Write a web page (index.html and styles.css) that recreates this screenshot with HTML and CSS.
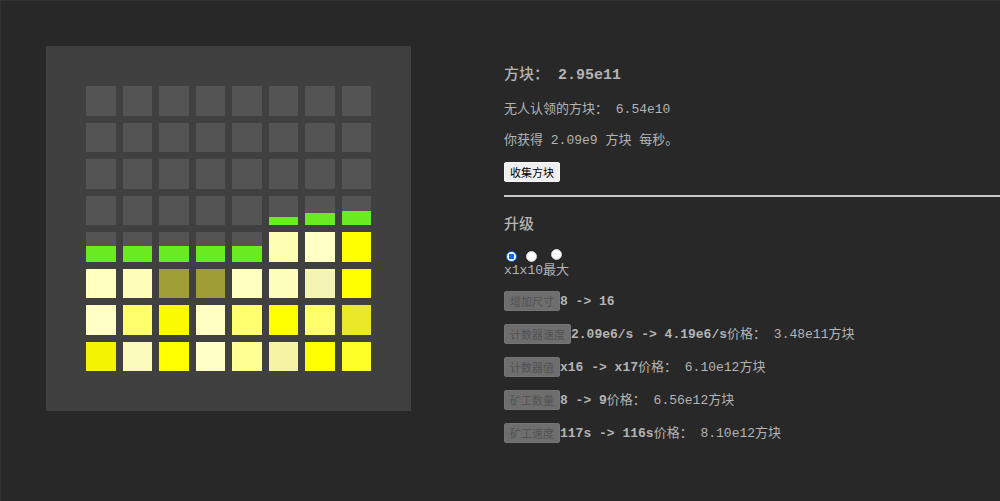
FILE: index.html
```html
<!DOCTYPE html>
<html lang="zh-CN">
<head>
<meta charset="utf-8">
<meta name="viewport" content="width=device-width, initial-scale=1">
<title>方块</title>
<link rel="stylesheet" href="styles.css">
</head>
<body>
<main class="game">
  <div class="board">
    <i class="cell"></i><i class="cell"></i><i class="cell"></i><i class="cell"></i><i class="cell"></i><i class="cell"></i><i class="cell"></i><i class="cell"></i>
    <i class="cell"></i><i class="cell"></i><i class="cell"></i><i class="cell"></i><i class="cell"></i><i class="cell"></i><i class="cell"></i><i class="cell"></i>
    <i class="cell"></i><i class="cell"></i><i class="cell"></i><i class="cell"></i><i class="cell"></i><i class="cell"></i><i class="cell"></i><i class="cell"></i>
    <i class="cell"></i><i class="cell"></i><i class="cell"></i><i class="cell"></i><i class="cell"></i>
    <i class="cell"><b class="fill" style="height:28%"></b></i><i class="cell"><b class="fill" style="height:42%"></b></i><i class="cell"><b class="fill" style="height:49%"></b></i>
    <i class="cell"><b class="fill" style="height:51%"></b></i><i class="cell"><b class="fill" style="height:54%"></b></i><i class="cell"><b class="fill" style="height:54%"></b></i><i class="cell"><b class="fill" style="height:54%"></b></i><i class="cell"><b class="fill" style="height:54%"></b></i>
    <i class="cell" style="background:#ffffb3"></i><i class="cell" style="background:#ffffc6"></i><i class="cell" style="background:#ffff00"></i>
    <i class="cell" style="background:#ffffc0"></i><i class="cell" style="background:#ffffbb"></i><i class="cell" style="background:#a09f36"></i><i class="cell" style="background:#9f9e36"></i><i class="cell" style="background:#ffffc0"></i><i class="cell" style="background:#ffffbd"></i><i class="cell" style="background:#f4f4b4"></i><i class="cell" style="background:#ffff00"></i>
    <i class="cell" style="background:#ffffc6"></i><i class="cell" style="background:#ffff6c"></i><i class="cell" style="background:#fbfb00"></i><i class="cell" style="background:#ffffc3"></i><i class="cell" style="background:#ffff70"></i><i class="cell" style="background:#ffff00"></i><i class="cell" style="background:#ffff6c"></i><i class="cell" style="background:#e8e828"></i>
    <i class="cell" style="background:#f4f400"></i><i class="cell" style="background:#fafabd"></i><i class="cell" style="background:#ffff00"></i><i class="cell" style="background:#ffffc6"></i><i class="cell" style="background:#ffff93"></i><i class="cell" style="background:#f4f4a4"></i><i class="cell" style="background:#ffff00"></i><i class="cell" style="background:#ffff28"></i>
  </div>

  <section class="panel">
    <div class="summary">
      <h1 class="title">方块： <strong>2.95e11</strong></h1>
      <p class="line">无人认领的方块： 6.54e10</p>
      <p class="line">你获得 2.09e9 方块 每秒。</p>
      <button class="btn" type="button">收集方块</button>
    </div>
    <div class="upgrades">
      <h2 class="title">升级</h2>
      <div class="amounts">
        <label class="amount"><input class="radio" type="radio" name="amount" checked>x1</label>
        <label class="amount"><input class="radio" type="radio" name="amount">x10</label>
        <label class="amount amount-max"><input class="radio" type="radio" name="amount">最大</label>
      </div>
      <div class="upgrade"><button class="btn" type="button" disabled>增加尺寸</button><strong>8 -&gt; 16</strong></div>
      <div class="upgrade"><button class="btn" type="button" disabled>计数器速度</button><strong>2.09e6/s -&gt; 4.19e6/s</strong><span>价格： 3.48e11方块</span></div>
      <div class="upgrade"><button class="btn" type="button" disabled>计数器值</button><strong>x16 -&gt; x17</strong><span>价格： 6.10e12方块</span></div>
      <div class="upgrade"><button class="btn" type="button" disabled>矿工数量</button><strong>8 -&gt; 9</strong><span>价格： 6.56e12方块</span></div>
      <div class="upgrade"><button class="btn" type="button" disabled>矿工速度</button><strong>117s -&gt; 116s</strong><span>价格： 8.10e12方块</span></div>
    </div>
  </section>
</main>
</body>
</html>
```

FILE: styles.css
```css
* {
  box-sizing: border-box;
}

body {
  margin: 0;
  background: #282828;
  color: #b4b4b4;
  font: 13px/20px "Liberation Mono", "Noto Sans CJK SC", monospace;
}

.game {
  display: grid;
  grid-template-columns: minmax(0, 365fr) minmax(0, 496fr);
  column-gap: 93px;
  align-items: start;
  min-height: 100vh;
  padding: 45px 0 45px 45px;
  border-top: 1px solid #333;
  border-left: 1px solid #303030;
}

.board {
  display: grid;
  grid-template-columns: repeat(8, minmax(0, 1fr));
  grid-template-rows: repeat(8, minmax(0, 1fr));
  gap: 7px;
  padding: 40px;
  aspect-ratio: 1;
  background: #404040;
}

.cell {
  display: flex;
  align-items: flex-end;
  background: #545454;
}

.fill {
  width: 100%;
  background: #6aea20;
}

.summary {
  padding: 20px 0 13px;
  border-bottom: 2px solid #c8c8c8;
}

.title {
  margin: 0;
  font-size: 15px;
  font-weight: 500;
  line-height: 20px;
}

.line {
  margin: 0 0 11px;
}

.summary .title {
  margin-bottom: 14px;
}

.btn {
  display: block;
  flex: none;
  height: 20px;
  margin: 0;
  padding: 0 5px;
  border: 1px solid #f6f6f6;
  border-radius: 2px;
  background: #efefef;
  color: #000;
  font: 11px/18px "Noto Sans CJK SC", sans-serif;
}

.btn:disabled {
  border-color: #747474;
  background: #6e6e6e;
  color: #525252;
}

.upgrades {
  padding-top: 19px;
}

.amounts {
  display: flex;
  align-items: flex-end;
  margin: 13px 0 11px;
}

.amount {
  display: flex;
  flex-direction: column;
  align-items: center;
  line-height: 18px;
}

.amount-max {
  gap: 2px;
}

.radio {
  appearance: none;
  width: 11px;
  height: 11px;
  margin: 0;
  border: 1px solid #d0d0d0;
  border-radius: 50%;
  background: #fff;
}

.radio:checked {
  border-color: #0b6cf5;
  background: radial-gradient(circle, #0b6cf5 0 3px, #fff 3px);
}

.upgrade {
  display: flex;
  align-items: flex-start;
  margin-bottom: 11px;
  line-height: 22px;
  white-space: pre;
}
```
